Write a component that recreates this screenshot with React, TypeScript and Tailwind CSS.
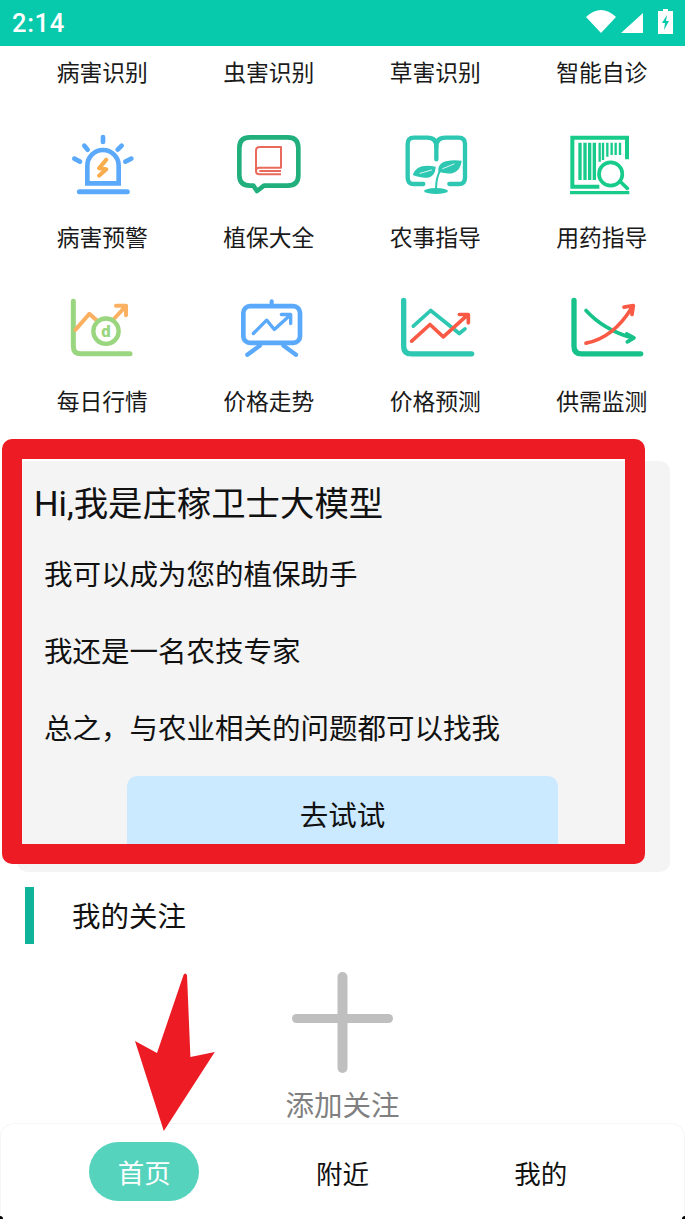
const labelFont = "font-['Roboto','Noto_Sans_CJK_SC',sans-serif]";

function Icon({ vb, children }: { vb: string; children: React.ReactNode }) {
  return (
    <svg viewBox={vb} className="h-20 w-20 overflow-visible" fill="none" strokeLinecap="round" strokeLinejoin="round">
      {children}
    </svg>
  );
}

const icons: Record<string, React.ReactNode> = {
  alarm: (
    <Icon vb="66 15 240 240">
      <g stroke="#5aa9fb">
        <path d="M118 215H262" strokeWidth="15" />
        <path d="M142 190V137A47 47 0 0 1 236 137V190Z" strokeWidth="14" strokeLinejoin="miter" />
        <path d="M189 51V66M133 77L143 89M245 77L233 89M103 116L120 125M274 116L256 125" strokeWidth="14" />
      </g>
      <path d="M199 119L177 145L199 148L177 167" stroke="#f9ad4d" strokeWidth="12" />
    </Icon>
  ),
  bubble: (
    <Icon vb="567 15 240 240">
      <path d="M640 197H630Q598 197 598 165V84Q598 52 630 52H743Q775 52 775 84V165Q775 197 743 197H672L651 213Z" stroke="#21b07d" strokeWidth="14" />
      <path d="M648 153V92Q648 81 659 81H723V143H658Q648 143 648 153Q648 163 658 163H723M658 153H723" stroke="#e96a5a" strokeWidth="6" strokeLinecap="butt" />
    </Icon>
  ),
  book: (
    <Icon vb="75 15 240 240">
      <g stroke="#2dc7b2" strokeWidth="13">
        <path d="M160 192H132Q113 192 113 173V72Q113 53 132 53H172Q199 53 199 80V118" />
        <path d="M199 80Q199 53 226 53H266Q285 53 285 72V173Q285 192 266 192H238" />
        <path d="M198 208Q198 170 212 150" strokeWidth="6" />
      </g>
      <path d="M128 165Q140 128 197 140Q195 190 128 165Z" fill="#2dc7b2" />
      <path d="M205 155Q200 115 275 122Q268 175 205 155Z" fill="#2dc7b2" />
      <path d="M150 160L185 150M218 146L252 132" stroke="#fff" strokeWidth="2.5" />
      <ellipse cx="198" cy="213" rx="36" ry="9" fill="#2dc7b2" />
    </Icon>
  ),
  barcode: (
    <Icon vb="576 15 240 240">
      <g stroke="#17cb8a">
        <path d="M688 200H607V53H771V118" strokeWidth="12" strokeLinecap="butt" strokeLinejoin="miter" />
        <path d="M600 218H778" strokeWidth="10" strokeLinecap="butt" />
        <g strokeLinecap="butt">
          <path d="M630 68V180M645 68V180M659 68V180M673 68V180" strokeWidth="10" />
          <path d="M689 68V125M699 68V120M712 68V110M725 68V105M737 68V105M750 68V105" strokeWidth="7" />
        </g>
        <circle cx="722" cy="162" r="35" fill="#fff" strokeWidth="11" />
        <path d="M752 186L772 205" strokeWidth="11" />
      </g>
    </Icon>
  ),
  daily: (
    <Icon vb="66 13.5 240 240">
      <path d="M100 50V185Q100 208 123 208H270" stroke="#9ad67f" strokeWidth="15" />
      <path d="M106 136L148 88L178 115M220 105L255 68M228 64H258V92" stroke="#fbb161" strokeWidth="12" />
      <circle cx="198" cy="140" r="38" fill="#fff" stroke="#9ad67f" strokeWidth="13" />
      <text x="198" y="158" textAnchor="middle" fontFamily="Roboto" fontWeight="900" fontSize="50" fill="#9ad67f">d</text>
    </Icon>
  ),
  board: (
    <Icon vb="567 13.5 240 240">
      <g stroke="#5aa9fb">
        <rect x="610" y="65" width="170" height="110" rx="20" strokeWidth="14" />
        <path d="M695 50V58" strokeWidth="12" />
        <path d="M660 183L622 211M730 183L768 211" strokeWidth="13" />
        <path d="M640 147L680 107L703 135L750 92M724 90H752V117" strokeWidth="10" />
      </g>
    </Icon>
  ),
  forecast: (
    <Icon vb="75 13.5 240 240">
      <path d="M101 48V185Q101 208 124 208H305" stroke="#2dc7b2" strokeWidth="16" />
      <path d="M130 125L182 78L268 147L285 133" stroke="#2dc7b2" strokeWidth="11" />
      <path d="M125 170L180 120L220 157L292 92M268 90H295V115" stroke="#fa5a45" strokeWidth="11" />
    </Icon>
  ),
  supply: (
    <Icon vb="576 13.5 240 240">
      <path d="M612 48V185Q612 208 635 208H812" stroke="#17c28a" strokeWidth="16" />
      <path d="M648 78Q700 135 785 160M770 148L792 160L772 172" stroke="#17c28a" strokeWidth="11" />
      <path d="M648 176Q730 160 785 70M762 68L790 63L786 90" stroke="#fa5a45" strokeWidth="11" />
    </Icon>
  ),
};

const rows = [
  [["alarm", "病害预警"], ["bubble", "植保大全"], ["book", "农事指导"], ["barcode", "用药指导"]],
  [["daily", "每日行情"], ["board", "价格走势"], ["forecast", "价格预测"], ["supply", "供需监测"]],
];

function GridRow({ items }: { items: string[][] }) {
  return (
    <div className="grid grid-cols-4 pl-[19px]">
      {items.map(([icon, label]) => (
        <div key={label} className="flex flex-col items-center gap-5">
          {icons[icon]}
          <span className="h-[26px] text-[22.8px] leading-[28px] text-[#1a1a1a]">{label}</span>
        </div>
      ))}
    </div>
  );
}

export default function App() {
  return (
    <div className={`relative flex h-[1219px] w-[685px] flex-col overflow-hidden bg-white ${labelFont}`}>
      <div className="flex h-[46px] shrink-0 items-center justify-between bg-[#07c9ac] pl-3 pr-[12px]">
        <span className="font-['Roboto'] text-[25.5px] font-medium tracking-[0.7px] text-white">2:14</span>
        <div className="flex items-center">
          <svg width="30" height="23" viewBox="0 0 30 23" className="mt-[-3px]">
            <path d="M0 7Q15 -7 30 7L15 23Z" fill="#fff" />
          </svg>
          <svg width="22" height="20" viewBox="0 0 22 20" className="ml-[5px]">
            <path d="M22 0V20H0Z" fill="#fff" />
          </svg>
          <svg width="15" height="25" viewBox="0 0 15 25" className="ml-[15px] mt-[-3px]">
            <path fillRule="evenodd" d="M5 0H10V2H15V25H0V2H5ZM9 6L4 14H7L6 21L11 12H8Z" fill="#fff" />
          </svg>
        </div>
      </div>

      <div className="grid grid-cols-4 pl-[19px] pt-[14px]">
        {["病害识别", "虫害识别", "草害识别", "智能自诊"].map((t) => (
          <span key={t} className="h-[26px] text-center text-[22.8px] leading-[28px] text-[#1a1a1a]">{t}</span>
        ))}
      </div>

      <div className="mt-[39px] flex flex-col gap-[38px]">
        {rows.map((r, i) => (
          <GridRow key={i} items={r} />
        ))}
      </div>

      <div className="ml-[17px] mt-[45.5px] h-[411px] w-[653px] shrink-0 overflow-hidden rounded-[10px] bg-[#f4f4f4] pt-[21px]">
        <div className="pl-[17px] text-[34.4px] leading-[44px] text-[#111]">Hi,我是庄稼卫士大模型</div>
        <div className="mt-[11.5px] flex flex-col pl-[27px] text-[28.5px] leading-[77px] text-[#111]">
          <span>我可以成为您的植保助手</span>
          <span>我还是一名农技专家</span>
          <span>总之，与农业相关的问题都可以找我</span>
        </div>
        <div className="ml-[110px] mt-[7.5px] flex h-[78px] w-[431px] items-center justify-center rounded-[10px] bg-[#cceaff] pt-[6px] text-[28.5px] text-[#111]">
          去试试
        </div>
      </div>

      <div className="ml-[25px] mt-[15px] flex h-[57px] shrink-0 items-center border-l-[9px] border-[#0fb39a] pl-[38px] pt-[6px] text-[28.5px] text-[#111]">
        我的关注
      </div>

      <div className="mt-[28px] flex shrink-0 flex-col items-center">
        <svg width="101" height="101" viewBox="0 0 101 101" fill="#bfbfbf">
          <rect x="45.5" y="0" width="10" height="101" rx="5" />
          <rect x="0" y="42" width="101" height="9" rx="4.5" />
        </svg>
        <span className="mt-[18px] h-[32px] text-[28.5px] leading-[32px] text-[#808080]">添加关注</span>
      </div>

      <div className="mt-auto grid h-[96px] shrink-0 grid-cols-3 items-center rounded-t-[14px] border border-b-0 border-[#f6f6f6] bg-white px-[44px] text-[26.5px] text-[#111]">
        <div className="flex justify-center">
          <span className="flex h-[59px] w-[110px] items-center justify-center rounded-[30px] bg-[#55d3bc] pt-[4px] text-white">首页</span>
        </div>
        <span className="pt-[6px] text-center">附近</span>
        <span className="pt-[6px] text-center">我的</span>
      </div>

      <div className="absolute left-[2px] top-[439px] h-[425px] w-[643px] rounded-[10px] border-[20px] border-[#ed1c24]" />
      <svg className="absolute left-0 top-0" width="685" height="1219" viewBox="0 0 685 1219">
        <path d="M183.5 975Q185 972 187 975L190.4 1057L214.8 1052L163.8 1131L135 1041L157 1053Z" fill="#ed1c24" />
      </svg>
      <div className="absolute bottom-0 left-0 h-[3px] w-[3px] rounded-tr-full bg-black" />
      <div className="absolute bottom-0 right-0 h-[3px] w-[3px] rounded-tl-full bg-black" />
    </div>
  );
}
